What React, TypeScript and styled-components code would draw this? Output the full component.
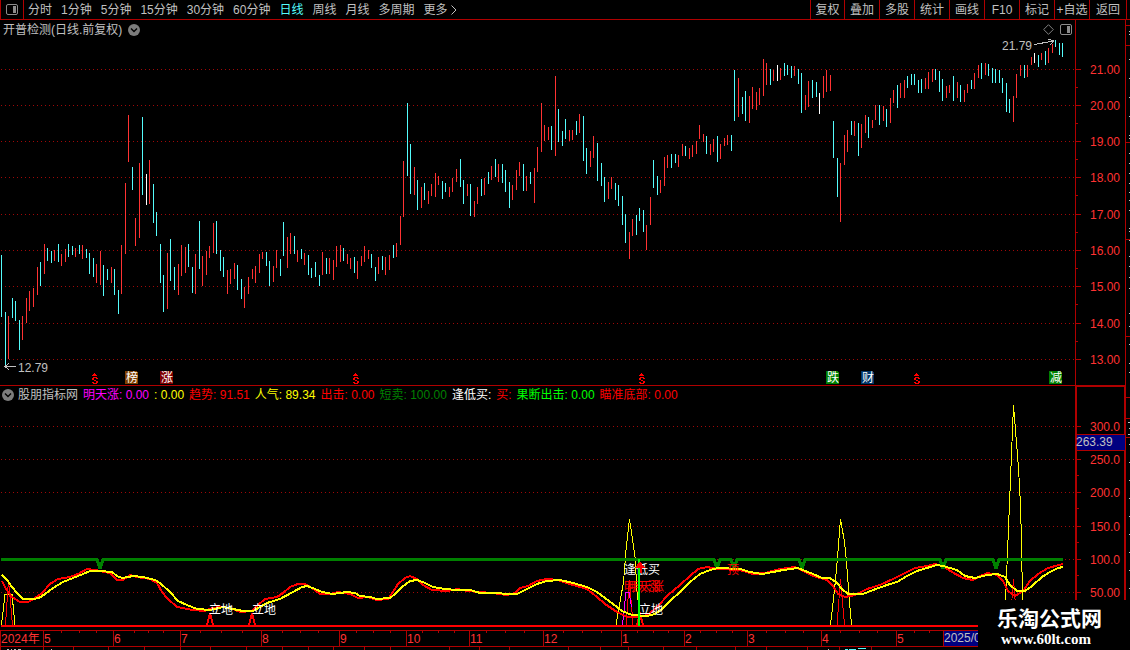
import React from "react";
import styled, { createGlobalStyle } from "styled-components";

const RED = "#b00000";
const GREY = "#c0c0c0";

const GlobalStyle = createGlobalStyle`
  * { box-sizing: border-box; }
  body {
    margin: 0;
    background: #000;
    overflow-x: hidden;
  }
  body, button {
    font-family: "Liberation Sans", "Noto Sans CJK SC", sans-serif;
    font-size: 12px;
    line-height: 16px;
  }
`;

/* ---------- data ---------- */

// One session per entry: kind (c = down, r = up, w = flat), top, bottom.
const SESSIONS = `
c217,279 c274,329 r278,321 c260,280 c263,283 c282,312 r278,302 r260,285 r253,273 r250,269
r229,257 c224,248 r206,236 c210,223 c213,225 r212,223 c206,224 r216,228 r211,224 c206,219
c208,217 r210,219 c207,216 r207,221 c211,220 c215,236 c220,239 r226,245 r213,247 c227,258
c231,242 r229,245 c231,257 c252,276 r207,256 r145,216 r77,124 c129,152 r180,208 r125,200
c79,157 w136,167 r122,166 c146,185 c174,198 c206,245 c237,274 r215,271 c201,243 c229,252
r226,257 r207,238 r209,235 c206,229 c229,255 r216,256 c183,231 r218,248 r213,237 r208,220
r185,215 c183,216 c212,233 c219,239 r232,256 r231,246 r225,241 c227,252 c241,261 r249,270
r239,256 r231,241 r228,245 r216,235 r214,221 c214,228 c223,248 r228,244 r212,230 c221,238
c184,218 r199,230 r195,216 c198,216 r212,224 c211,221 r215,227 c217,237 c230,240 c224,239
c237,248 r214,237 c220,236 r220,236 r222,242 r208,229 r207,224 c210,223 r216,226 r220,231
c219,235 r223,241 r218,228 r208,224 r212,221 c216,230 c229,243 r219,236 c218,232 r219,237
r217,232 c207,220 r205,219 r178,207 r123,179 c65,138 c106,156 r129,157 c142,172 r149,170
c145,162 r153,166 r146,158 r135,159 r138,147 c143,161 c145,154 r149,159 r140,154 r131,144
c121,149 c142,166 r146,158 c146,178 r163,179 r149,166 c141,158 r140,157 c134,146 r128,142
c121,139 r126,144 c126,145 c132,154 c144,170 r147,162 r132,152 r124,138 c126,153 r138,153
c134,146 r130,165 r109,134 r65,114 r87,103 r89,102 c88,112 r38,118 c71,104 c93,108
c81,101 r92,103 r92,102 c83,97 r76,95 c78,123 c110,136 r113,129 r98,120 c105,143
c125,148 c139,164 r144,161 r139,151 c145,162 c147,168 c158,187 c176,205 r194,221 r181,198
c177,197 c170,183 c172,194 r187,212 r159,187 c122,150 c138,157 r142,155 r119,148 r117,130
c116,130 c116,125 r117,129 r106,118 c108,118 r110,121 r107,119 r103,116 r87,101 r96,104
c98,116 r106,117 r101,114 c98,124 r106,121 r100,108 r97,107 c97,113 c32,83 r40,79
c59,76 c53,83 r58,85 r49,71 r54,72 r50,67 r21,58 r25,47 c31,47 r32,43
w27,43 r30,42 c25,38 c27,37 c28,40 r28,38 c31,46 c35,75 r57,72 r43,69
c42,60 c44,59 w55,76 r38,60 r32,54 r37,53 c83,120 c120,159 r125,184 r97,127
r92,114 c83,97 r83,98 c85,118 r86,110 r77,95 c79,100 r82,90 r67,82 c67,87
r68,83 c71,89 r60,85 r52,65 c47,70 r45,60 r42,60 c38,50 c36,47 c36,47
c42,55 c41,55 r40,51 r34,51 r31,44 c31,42 c33,54 c41,63 r48,60 r47,55
c38,63 r44,60 c47,64 r52,64 r46,55 c42,51 r35,51 r27,40 c25,41 r25,37
c26,38 c30,45 c31,45 c32,45 c40,55 c45,74 c61,75 r58,84 r36,60 r27,38
c27,40 r27,39 r19,27 w15,25 c17,29 r15,22 c13,27 r10,25 r6,15 c2,9
c5,17 c5,19`
  .trim()
  .split(/\s+/)
  .map((s) => {
    const [top, bottom] = s.slice(1).split(",").map(Number);
    return { kind: s[0], top, bottom };
  });

const KIND_COLOR: Record<string, string> = { c: "#54fcfc", r: "#ff3232", w: "#ffffff" };
const SESSION_STEP = 3.525;
const sessionX = (i: number) => Math.floor(1.76 + i * SESSION_STEP);

const PRICE_LEVELS = [
  { label: "21.00", y: 49 },
  { label: "20.00", y: 85 },
  { label: "19.00", y: 121 },
  { label: "18.00", y: 157 },
  { label: "17.00", y: 194 },
  { label: "16.00", y: 230 },
  { label: "15.00", y: 266 },
  { label: "14.00", y: 303 },
  { label: "13.00", y: 339 },
];

const INDICATOR_LEVELS = [
  { label: "300.0", y: 40 },
  { label: "250.0", y: 73 },
  { label: "200.0", y: 106 },
  { label: "150.0", y: 140 },
  { label: "100.0", y: 173 },
  { label: "50.00", y: 206 },
];

const PERIODS = ["分时", "1分钟", "5分钟", "15分钟", "30分钟", "60分钟", "日线", "周线", "月线", "多周期"];
const TOOLS = ["复权", "叠加", "多股", "统计", "画线", "F10", "标记", "+自选", "返回"];

const READINGS = [
  { text: "明天涨: 0.00", color: "#ff00ff" },
  { text: ": 0.00", color: "#ffff00" },
  { text: "趋势: 91.51", color: "#ff0000" },
  { text: "人气: 89.34", color: "#ffff00" },
  { text: "出击: 0.00", color: "#ff0000" },
  { text: "短卖: 100.00", color: "#008000" },
  { text: "逢低买:", color: "#ffffff" },
  { text: "买:", color: "#ff0000" },
  { text: "果断出击: 0.00", color: "#00ff00" },
  { text: "瞄准底部: 0.00", color: "#ff0000" },
];

const EVENTS = [
  { text: "榜", x: 125, fill: "#7f3f00" },
  { text: "涨", x: 160, fill: "#7f0000" },
  { text: "跌", x: 826, fill: "#007f00" },
  { text: "财", x: 861, fill: "#003468" },
  { text: "减", x: 1049, fill: "#007f00" },
];
const DIVIDENDS = [94, 355, 641, 916];

const MONTHS = [
  { text: "5", x: 43 },
  { text: "6", x: 113 },
  { text: "7", x: 180 },
  { text: "8", x: 261 },
  { text: "9", x: 339 },
  { text: "10", x: 406 },
  { text: "11", x: 469 },
  { text: "12", x: 543 },
  { text: "1", x: 621 },
  { text: "2", x: 684 },
  { text: "3", x: 747 },
  { text: "4", x: 821 },
  { text: "5", x: 896 },
];
const WEEK_TICKS = [
  61, 79, 96, 134, 148, 163, 200, 221, 242, 282, 300, 318, 356, 373, 390, 422, 438, 454, 486, 505,
  524, 563, 582, 601, 637, 653, 668, 700, 716, 732, 766, 785, 803, 840, 859, 877, 914, 929,
];
const LOWER_TICKS = [
  0, 43, 73, 108, 144, 180, 210, 246, 282, 308, 333, 364, 390, 449, 479, 509, 568, 600, 628, 663,
  696, 735, 766, 807, 839, 871,
];

const YELLOW_LINE =
  "2,173 7,178 12,185 17,191 23,197 33,197 39,196 45,192 53,186 63,180 73,176 83,172 90,169 100,169 112,170 117,174 122,176 128,175 133,174 143,175 155,178 160,181 170,190 178,199 187,203 197,207 210,208 223,205 233,207 243,209 253,209 260,205 267,201 280,197 293,190 302,185 307,184 315,187 322,190 333,192 347,190 355,191 360,194 370,195 377,197 390,196 395,192 402,185 410,179 417,178 425,181 433,185 445,187 457,188 470,188 480,191 493,191 510,192 517,192 527,187 537,182 547,179 560,178 573,181 587,185 597,190 605,196 613,202 622,209 632,213 647,214 655,212 662,207 670,199 680,190 690,180 700,172 710,168 718,166 740,167 750,170 762,172 773,170 783,168 798,166 805,169 813,172 822,176 830,176 837,181 842,187 848,192 863,192 873,188 887,183 897,180 907,174 917,169 927,166 937,163 943,164 957,168 965,174 975,176 987,173 997,172 1005,175 1010,183 1017,189 1025,189 1032,184 1042,175 1050,170 1058,166 1063,165";
const RED_LINE =
  "2,179 6,187 12,195 20,200 28,200 35,196 42,191 50,182 58,177 70,175 78,172 87,167 95,168 100,169 110,171 117,178 123,178 130,173 137,175 150,177 157,181 162,190 167,196 177,205 193,208 205,209 212,206 220,205 230,206 240,210 252,209 258,203 265,197 277,195 283,191 290,185 298,182 305,182 312,186 320,192 330,192 338,190 350,192 358,196 368,195 377,198 388,197 393,190 398,182 405,176 410,174 417,177 423,183 432,188 447,189 458,187 467,189 480,190 492,191 507,193 515,191 520,186 528,184 537,179 547,177 558,178 573,183 587,187 597,195 605,202 617,210 627,215 638,215 648,213 658,204 668,193 680,183 690,174 698,167 707,165 717,167 740,168 753,172 765,171 780,167 795,165 805,170 813,174 827,178 833,184 838,192 845,195 855,193 867,187 880,183 893,177 907,170 915,166 927,164 935,162 943,164 952,170 963,176 973,178 980,174 988,171 997,173 1003,179 1008,189 1015,194 1023,189 1030,179 1038,172 1048,166 1063,162";

const DIPS = [100, 717, 734, 802, 943, 996];
const GREEN_LINE =
  "M1,157.5 " + DIPS.map((x) => `H${x - 3} L${x},167 L${x + 3},157.5`).join(" ") + " H1063";

/* ---------- layout ---------- */

const Screen = styled.div`
  position: relative;
  background: #000;
  color: ${GREY};
  overflow: hidden;
`;

const Toolbar = styled.header`
  display: flex;
  justify-content: space-between;
  height: 20px;
  padding-right: 3px;
  border-bottom: 1px solid ${RED};
`;

const PeriodNav = styled.nav`
  display: flex;
  align-items: center;
  gap: 9px;
  white-space: nowrap;
`;

const PlainButton = styled.button<{ $active?: boolean }>`
  display: flex;
  align-items: center;
  padding: 0;
  border: 0;
  background: none;
  color: ${(p) => (p.$active ? "#54fcfc" : GREY)};
  cursor: pointer;
`;

const PanelToggle = styled(PlainButton)`
  align-self: stretch;
  justify-content: center;
  width: 24px;
  margin-right: -5px;
  border: solid ${RED};
  border-width: 0 1px;
`;

const ToolGroup = styled.div`
  display: grid;
  grid-template-columns: 34px repeat(7, 35px) 37px;
  border-right: 1px solid ${RED};
`;

const ToolButton = styled(PlainButton)`
  justify-content: center;
  border-left: 1px solid ${RED};
  white-space: nowrap;
`;

const Workspace = styled.main`
  display: grid;
  grid-template-columns: minmax(0, 1fr) 51px 4px;
`;

const Column = styled.div`
  display: flex;
  flex-direction: column;
  min-width: 0;
`;

const TitleRow = styled.div`
  display: flex;
  align-items: center;
  justify-content: space-between;
  height: 18px;
  padding: 1px 3px 0;
`;

const Cluster = styled.div`
  display: flex;
  align-items: center;
  gap: 6px;
`;

const Title = styled.h1`
  margin: 0;
  font-size: 12px;
  font-weight: 400;
`;

const ReadingRow = styled.div`
  display: flex;
  align-items: center;
  gap: 5px;
  height: 16px;
  padding: 1px 0 0 2px;
  white-space: nowrap;
`;

const IndicatorName = styled.span`
  margin-left: -1px;
`;

const Reading = styled.span<{ $color: string }>`
  color: ${(p) => p.$color};
`;

const Chart = styled.svg`
  display: block;
  width: 100%;
  shape-rendering: crispEdges;
  font-size: 12px;
`;

const AxisText = styled.text`
  fill: #ff3232;
`;

const Note = styled.text<{ $color?: string }>`
  fill: ${(p) => p.$color ?? GREY};
`;

const Watermark = styled.footer`
  position: absolute;
  right: 0;
  bottom: 0;
  width: 152px;
  height: 50px;
  padding: 8px 0 0 19px;
  background: #000;
  color: #fff;
`;

const SiteName = styled.div`
  font-size: 21px;
  font-weight: 700;
  line-height: 22px;
  white-space: nowrap;
`;

const SiteLink = styled.a`
  display: block;
  padding-left: 4px;
  color: #fff;
  font: 700 15px/18px "Liberation Serif", serif;
  text-decoration: none;
`;

/* ---------- icons ---------- */

const PanelIcon = () => (
  <svg width="12" height="11" viewBox="0 0 12 11" aria-hidden="true">
    <rect x="0.5" y="0.5" width="11" height="10" rx="1.5" fill="none" stroke="#8c8c8c" />
    <rect x="7" y="2" width="3" height="7" fill="#8c8c8c" />
  </svg>
);

const DropIcon = () => (
  <svg width="12" height="12" viewBox="0 0 12 12" aria-hidden="true">
    <circle cx="6" cy="6" r="6" fill="#7c7c7c" />
    <path d="M3 4.5 L6 7.5 L9 4.5" fill="none" stroke="#000" strokeWidth="1.4" />
  </svg>
);

const DiamondIcon = () => (
  <svg width="11" height="11" viewBox="0 0 11 11" aria-hidden="true">
    <path d="M5.5 0.7 L10.3 5.5 L5.5 10.3 L0.7 5.5 Z" fill="none" stroke="#808080" />
  </svg>
);

const MoreIcon = () => (
  <svg width="6" height="10" viewBox="0 0 6 10" aria-hidden="true">
    <path d="M0.5 0.5 L5 5 L0.5 9.5" fill="none" stroke={GREY} />
  </svg>
);

/* ---------- chart parts ---------- */

const GridLine = ({ y }: { y: number }) => (
  <line x1="1" x2="100%" y1={y + 0.5} y2={y + 0.5} stroke="#a00808" strokeDasharray="1 3" />
);

const PriceChart = () => (
  <Chart height="348" role="img" aria-label="日线价格走势">
    {PRICE_LEVELS.map((l) => (
      <GridLine key={l.label} y={l.y - 18} />
    ))}
    {SESSIONS.map((s, i) => (
      <rect key={i} x={sessionX(i)} y={s.top} width="1" height={s.bottom - s.top} fill={KIND_COLOR[s.kind]} />
    ))}
    <g fill="none" stroke={GREY}>
      <path d="M16,328.5 H5 M9,325 L5,328.5 L9,332" />
      <path d="M1034,6.5 L1054,3 M1048,1 L1054,3 L1050,7" />
    </g>
    <Note x="18" y="334">12.79</Note>
    <Note x="1002" y="12">21.79</Note>
    {DIVIDENDS.map((x) => (
      <g key={x} transform={`translate(${x - 2} 335)`} fill="#ff0000">
        <path d="M2,0 h1 v1 h1 v1 h-3 v-1 h1 Z M0,2 h5 v1 h-5 Z" />
        <path d="M1,4 h4 v1 h1 v1 h-2 v-1 h-2 v2 h2 v1 h2 v2 h-1 v1 h-4 v-1 h-1 v-1 h2 v1 h2 v-2 h-2 v-1 h-2 v-2 h1 Z" />
      </g>
    ))}
    {EVENTS.map((e) => (
      <g key={e.x}>
        <path d={`M${e.x},333 h11 l2,2 v11 h-13 Z`} fill={e.fill} />
        <Note x={e.x + 1} y="344" $color="#fff">{e.text}</Note>
      </g>
    ))}
    <rect x="0" y="347" width="100%" height="1" fill={RED} />
  </Chart>
);

const IndicatorChart = () => (
  <Chart height="228" role="img" aria-label="指标走势">
    {INDICATOR_LEVELS.map((l) => (
      <GridLine key={l.label} y={l.y - 16} />
    ))}
    <rect x="1" y="223" width="1062" height="2" fill="#ff0000" />
    <g fill="none" stroke="#ffff00">
      <path d="M1.5,223 L5,192 H12 L15,223" />
      <path d="M616,223 L623.5,180 L626,148 L629.5,117 L635,155 L637.5,198" />
      <path d="M830.5,223 L834.5,188 L837.5,156 L840.5,117 L844.5,140 L846.5,160 L849.5,200 L851.5,223" />
      <path d="M1005.5,200 L1008.5,126 L1013.5,3 L1018.5,66 L1020.5,103 L1021.5,140 L1022.5,198" />
    </g>
    <g fill="none" stroke="#ff0000">
      <path d="M5.5,223 L8.5,178 L12.5,223" />
      <path d="M626,223 L629.5,178 L633,223" />
      <path d="M837,223 L840.5,177 L844.5,223" />
      <path d="M1010,223 L1013.5,177 L1017,223" />
    </g>
    <path d="M622.5,223 L626,190 H629 L631.5,205" fill="none" stroke="#ff00ff" />
    <g fill="none" stroke="#ff0000" strokeWidth="2">
      <path d="M207,223 L210,211 L213,223" />
      <path d="M249,223 L252,211 L255,223" />
      <path d="M637,223 L640,212 L643,223" />
    </g>
    <polyline points={RED_LINE} fill="none" stroke="#ff0000" strokeWidth="2" />
    <path d={GREEN_LINE} fill="none" stroke="#008000" strokeWidth="3" strokeLinejoin="bevel" />
    <polyline points={YELLOW_LINE} fill="none" stroke="#ffff00" strokeWidth="2" />
    <Note x="209" y="212" $color="#fff">立地</Note>
    <Note x="252" y="212" $color="#fff">立地</Note>
    <Note x="639" y="212" $color="#fff">立地</Note>
    <Note x="624" y="172" $color="#fff">逢低买</Note>
    <Note x="624" y="189" $color="#ff0000">明天涨</Note>
    <Note x="628" y="189" $color="#ff0000">明天涨</Note>
    <Note x="727" y="172" $color="#ff0000">顶</Note>
    <rect x="638" y="157" width="2" height="67" fill="#00ff00" />
    <path d="M635,166 L640,159 L645,166 H642 V171 H640 V166 Z" fill="#ff0000" />
  </Chart>
);

const DateAxis = () => (
  <Chart height="20" role="img" aria-label="日期">
    <rect x="0" y="0" width="100%" height="1" fill={RED} />
    <rect x="0" y="16" width="100%" height="1" fill={RED} />
    <rect x="0" y="0" width="1" height="20" fill={RED} />
    {MONTHS.map((m) => (
      <g key={m.x}>
        <rect x={m.x} y="0" width="1" height="16" fill={RED} />
        <AxisText x={m.x + 1} y="13">{m.text}</AxisText>
      </g>
    ))}
    {WEEK_TICKS.map((x) => (
      <rect key={x} x={x} y="1" width="1" height="2" fill={RED} />
    ))}
    {LOWER_TICKS.map((x) => (
      <rect key={x} x={x} y="17" width="1" height="3" fill={RED} />
    ))}
    <AxisText x="1" y="13">2024年</AxisText>
    <rect x="943" y="0" width="60" height="16" fill="#000080" stroke={RED} />
    <Note x="944" y="12">2025/06</Note>
    <path d="M7,19.5 h2 M11,19.5 h1 M14,19.5 h2 M18,19.5 h3 M51,19.5 h1 M828,19.5 h1" stroke={GREY} />
    <path d="M845,19.5 h3 M849,19.5 h7 M858,18.5 h8" stroke="#54fcfc" />
  </Chart>
);

const PriceAxis = () => (
  <Chart height="365" role="img" aria-label="价格刻度">
    <rect x="0" y="0" width="1" height="365" fill={RED} />
    <rect x="50" y="0" width="1" height="365" fill={RED} />
    {PRICE_LEVELS.map((l) => (
      <g key={l.label}>
        <rect x="1" y={l.y} width="5" height="1" fill={RED} />
        {l.y < 339 && <rect x="1" y={l.y + 18} width="2" height="1" fill={RED} />}
        <AxisText x="15" y={l.y + 5}>{l.label}</AxisText>
      </g>
    ))}
  </Chart>
);

const IndicatorAxis = () => (
  <Chart height="265" role="img" aria-label="指标刻度">
    <rect x="1" y="1" width="49" height="262" fill="none" stroke={RED} strokeWidth="2" />
    {INDICATOR_LEVELS.map((l) => (
      <g key={l.label}>
        <rect x="2" y={l.y + 1} width="4" height="1" fill={RED} />
        <rect x="2" y={l.y + 17} width="2" height="1" fill={RED} />
        <AxisText x="15" y={l.y + 6}>{l.label}</AxisText>
      </g>
    ))}
    <rect x="2" y="49" width="48" height="17" fill={RED} />
    <rect x="2" y="50" width="48" height="15" fill="#000080" />
    <Note x="1" y="61">263.39</Note>
  </Chart>
);

const QUOTE_MARKS = [11, 14, 39, 58, 77, 96, 115, 118, 133, 143, 153, 163, 172, 180, 190, 208, 211, 220, 236, 246, 257, 268, 293, 306, 324, 343, 352];

const QuoteEdge = () => (
  <Chart height="630" aria-hidden="true">
    {[5, 25, 122, 219, 316, 377, 398, 417].map((y) => (
      <rect key={y} x="0" y={y} width="4" height="1" fill={RED} />
    ))}
    {QUOTE_MARKS.map((y) => (
      <rect key={y} x="3" y={y} width="1" height="1" fill={GREY} />
    ))}
    <path d="M2,402.5 h2 M2,414.5 h2 M3,408.5 h1 M3,424.5 h1 M3,442.5 h1 M3,460.5 h1 M3,478.5 h1 M3,496.5 h1 M3,514.5 h1 M3,532.5 h1 M3,550.5 h1 M3,568.5 h1" stroke={GREY} />
  </Chart>
);

export default function App() {
  return (
    <>
      <GlobalStyle />
      <Screen>
        <Toolbar>
          <PeriodNav aria-label="周期">
            <PanelToggle aria-label="侧栏"><PanelIcon /></PanelToggle>
            {PERIODS.map((p) => (
              <PlainButton key={p} $active={p === "日线"}>{p}</PlainButton>
            ))}
            <PlainButton>更多&nbsp;<MoreIcon /></PlainButton>
          </PeriodNav>
          <ToolGroup>
            {TOOLS.map((t) => (
              <ToolButton key={t}>{t}</ToolButton>
            ))}
          </ToolGroup>
        </Toolbar>
        <Workspace>
          <Column>
            <TitleRow>
              <Cluster>
                <Title>开普检测(日线.前复权)</Title>
                <PlainButton aria-label="股票菜单"><DropIcon /></PlainButton>
              </Cluster>
              <Cluster>
                <PlainButton aria-label="标记点"><DiamondIcon /></PlainButton>
                <PlainButton aria-label="面板"><PanelIcon /></PlainButton>
              </Cluster>
            </TitleRow>
            <PriceChart />
            <ReadingRow>
              <PlainButton aria-label="指标菜单"><DropIcon /></PlainButton>
              <IndicatorName>股朋指标网</IndicatorName>
              {READINGS.map((r) => (
                <Reading key={r.text} $color={r.color}>{r.text}</Reading>
              ))}
            </ReadingRow>
            <IndicatorChart />
            <DateAxis />
          </Column>
          <Column>
            <PriceAxis />
            <IndicatorAxis />
          </Column>
          <QuoteEdge />
        </Workspace>
        <Watermark>
          <SiteName>乐淘公式网</SiteName>
          <SiteLink href="#home">www.60lt.com</SiteLink>
        </Watermark>
      </Screen>
    </>
  );
}
